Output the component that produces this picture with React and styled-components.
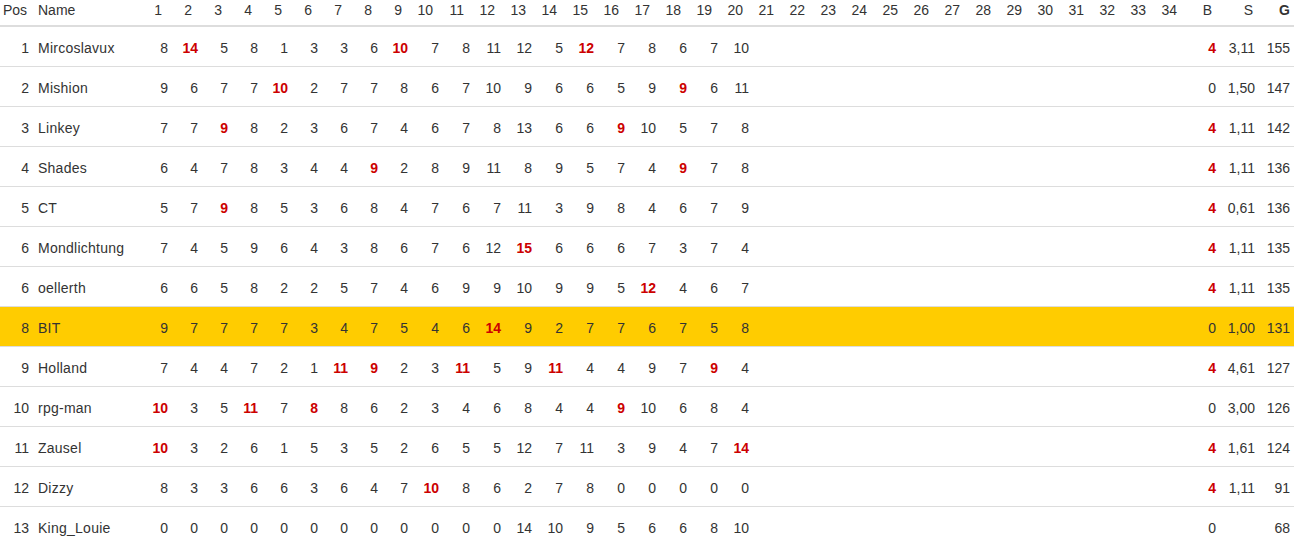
import styled, { createGlobalStyle } from "styled-components"

const GlobalStyle = createGlobalStyle`
  body {
    margin: 0;
    background: #fff;
    font-family: "Liberation Sans", Arial, sans-serif;
    font-size: 14px;
    color: #333;
  }
`

const players = [
    { pos: 1, name: "Mircoslavux", r: "8 14* 5 8 1 3 3 6 10* 7 8 11 12 5 12* 7 8 6 7 10", b: "4*", s: "3,11", g: 155 },
    { pos: 2, name: "Mishion", r: "9 6 7 7 10* 2 7 7 8 6 7 10 9 6 6 5 9 9* 6 11", b: "0", s: "1,50", g: 147 },
    { pos: 3, name: "Linkey", r: "7 7 9* 8 2 3 6 7 4 6 7 8 13 6 6 9* 10 5 7 8", b: "4*", s: "1,11", g: 142 },
    { pos: 4, name: "Shades", r: "6 4 7 8 3 4 4 9* 2 8 9 11 8 9 5 7 4 9* 7 8", b: "4*", s: "1,11", g: 136 },
    { pos: 5, name: "CT", r: "5 7 9* 8 5 3 6 8 4 7 6 7 11 3 9 8 4 6 7 9", b: "4*", s: "0,61", g: 136 },
    { pos: 6, name: "Mondlichtung", r: "7 4 5 9 6 4 3 8 6 7 6 12 15* 6 6 6 7 3 7 4", b: "4*", s: "1,11", g: 135 },
    { pos: 6, name: "oellerth", r: "6 6 5 8 2 2 5 7 4 6 9 9 10 9 9 5 12* 4 6 7", b: "4*", s: "1,11", g: 135 },
    { pos: 8, name: "BIT", r: "9 7 7 7 7 3 4 7 5 4 6 14* 9 2 7 7 6 7 5 8", b: "0", s: "1,00", g: 131, me: true },
    { pos: 9, name: "Holland", r: "7 4 4 7 2 1 11* 9* 2 3 11* 5 9 11* 4 4 9 7 9* 4", b: "4*", s: "4,61", g: 127 },
    { pos: 10, name: "rpg-man", r: "10* 3 5 11* 7 8* 8 6 2 3 4 6 8 4 4 9* 10 6 8 4", b: "0", s: "3,00", g: 126 },
    { pos: 11, name: "Zausel", r: "10* 3 2 6 1 5 3 5 2 6 5 5 12 7 11 3 9 4 7 14*", b: "4*", s: "1,61", g: 124 },
    { pos: 12, name: "Dizzy", r: "8 3 3 6 6 3 6 4 7 10* 8 6 2 7 8 0 0 0 0 0", b: "4*", s: "1,11", g: 91 },
    { pos: 13, name: "King_Louie", r: "0 0 0 0 0 0 0 0 0 0 0 0 14 10 9 5 6 6 8 10", b: "0", s: "", g: 68 }
]

const ROUNDS = 34

const Table = styled.table`
  width: 1294px;
  table-layout: fixed;
  border-collapse: separate;
  border-spacing: 0;
  font-size: 14px;
  line-height: 20px;
`

const Col = styled.col`
  width: ${(p) => p.$w}px;
`

const padHead = { pos: "0 0 5px 3px", name: "0 0 5px 5px", round: "0 8px 5px 0", b: "0 8px 5px 0", s: "0 6px 5px 0", g: "0 4px 5px 0" }
const padCell = { pos: "11px 4px 8px 0", name: "11px 0 8px 5px", round: "11px 2px 8px 0", b: "11px 4px 8px 0", s: "11px 4px 8px 0", g: "11px 4px 8px 0" }

const HeadCell = styled.th`
  padding: ${(p) => padHead[p.$kind]};
  text-align: ${(p) => (p.$kind === "pos" || p.$kind === "name" ? "left" : "right")};
  font-weight: ${(p) => (p.$kind === "g" ? 700 : 400)};
  vertical-align: bottom;
  white-space: nowrap;
  border-bottom: 2px solid #ddd;
`

const Row = styled.tr`
  background: ${(p) => (p.$me ? "#ffcc00" : "transparent")};
`

const Cell = styled.td`
  padding: ${(p) => padCell[p.$kind]};
  text-align: ${(p) => (p.$kind === "name" ? "left" : "right")};
  font-weight: ${(p) => (p.$top ? 700 : 400)};
  color: ${(p) => (p.$top ? "#cc0000" : "#333")};
  letter-spacing: ${(p) => (p.$kind === "name" ? "0.25px" : "0")};
  white-space: nowrap;
  overflow: hidden;
  border-top: ${(p) => (p.$first ? "none" : "1px solid #ddd")};
`

const parse = (v) => ({ text: v.replace("*", ""), top: v.endsWith("*") })

export default function App() {
    const rounds = Array.from(Array(ROUNDS).keys()).map((i) => i + 1)

    return (
        <>
            <GlobalStyle />
            <Table>
                <colgroup>
                    <Col $w={33} />
                    <Col $w={107} />
                    {rounds.map((n) => (
                        <Col key={"c" + n} $w={n < 10 ? 30 : 31} />
                    ))}
                    <Col $w={35} />
                    <Col $w={39} />
                    <Col $w={35} />
                </colgroup>
                <thead>
                    <tr>
                        <HeadCell $kind="pos">Pos</HeadCell>
                        <HeadCell $kind="name">Name</HeadCell>
                        {rounds.map((n) => (
                            <HeadCell key={"h" + n} $kind="round">{n}</HeadCell>
                        ))}
                        <HeadCell $kind="b">B</HeadCell>
                        <HeadCell $kind="s">S</HeadCell>
                        <HeadCell $kind="g">G</HeadCell>
                    </tr>
                </thead>
                <tbody>
                    {players.map((p, idx) => {
                        const vals = p.r.split(" ").map(parse)
                        const first = idx === 0
                        const b = parse(p.b)
                        return (
                            <Row key={p.name} $me={p.me}>
                                <Cell $kind="pos" $first={first}>{p.pos}</Cell>
                                <Cell $kind="name" $first={first}>{p.name}</Cell>
                                {rounds.map((n) => {
                                    const v = vals[n - 1]
                                    return (
                                        <Cell key={n} $kind="round" $first={first} $top={v && v.top}>
                                            {v ? v.text : ""}
                                        </Cell>
                                    )
                                })}
                                <Cell $kind="b" $first={first} $top={b.top}>{b.text}</Cell>
                                <Cell $kind="s" $first={first}>{p.s}</Cell>
                                <Cell $kind="g" $first={first}>{p.g}</Cell>
                            </Row>
                        )
                    })}
                </tbody>
            </Table>
        </>
    )
}
